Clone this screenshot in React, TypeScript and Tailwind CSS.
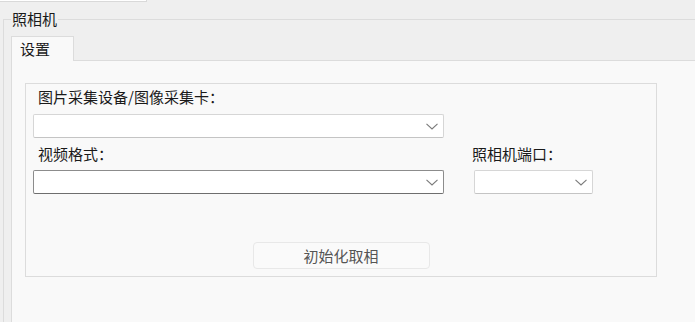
const Combo = ({ width, dark = false }: { width: string; dark?: boolean }) => (
  <div
    className={`${width} h-[24px] flex items-center justify-end pr-[5px] bg-white rounded-[2px] border ${
      dark ? 'border-[#8c8c8c] border-b-[#6e6e6e]' : 'border-[#d6d6d6] border-b-[#c4c4c4]'
    }`}
  >
    <svg width="12" height="7" viewBox="0 0 12 7" className="mt-[1px]">
      <polyline points="0.5,0.8 6,6 11.5,0.8" fill="none" stroke="#7a7a7a" strokeWidth="1.1" />
    </svg>
  </div>
);

const App = () => {
  return (
    <div
      className="w-[695px] h-[322px] overflow-hidden bg-[#efefef] flex flex-col text-[15px] leading-[20px] text-[#1a1a1a]"
      style={{ fontFamily: '"Noto Sans CJK SC", "Noto Sans", sans-serif' }}
    >
      {/* top strip */}
      <div className="w-[147px] h-[2px] bg-white border-b border-r border-[#d9d9d9]" />

      {/* 照相机 group */}
      <fieldset className="mt-[7px] ml-[3px] flex-1 flex flex-col border-t border-l border-[#dcdcdc] min-h-0">
        <legend className="ml-[7px] px-[1px]">照相机</legend>

        <div className="ml-[7px] mt-[7px] flex-1 flex flex-col min-h-0">
          {/* tab header */}
          <div className="flex">
            <div className="w-[63px] h-[25px] -mb-px relative z-10 bg-[#f9f9f9] border-t border-l border-r border-[#dcdcdc] pl-[8px] pt-[2px]">
              设置
            </div>
          </div>

          {/* tab pane */}
          <div className="flex-1 bg-[#f9f9f9] border-t border-l border-[#dcdcdc] pl-[13px] pt-[22px]">
            <div className="w-[632px] h-[194px] border border-[#dcdcdc] flex flex-col">
              <div className="pl-[7px] flex flex-col">
                <div className="mt-[3px] pl-[5px]">图片采集设备/图像采集卡：</div>
                <div className="mt-[7px]">
                  <Combo width="w-[411px]" />
                </div>

                <div className="flex mt-[6px]">
                  <div className="flex flex-col w-[411px]">
                    <div className="pl-[5px]">视频格式：</div>
                    <div className="mt-[6px]">
                      <Combo width="w-[411px]" dark />
                    </div>
                  </div>
                  <div className="flex flex-col ml-[28px]">
                    <div>照相机端口：</div>
                    <div className="mt-[6px] ml-[2px]">
                      <Combo width="w-[119px]" />
                    </div>
                  </div>
                </div>
              </div>

              <button className="self-center mt-[48px] w-[177px] h-[27px] rounded-[4px] border border-[#e8e8e8] bg-[#fafafa] text-[#555555]">
                初始化取相
              </button>
            </div>
          </div>
        </div>
      </fieldset>
    </div>
  );
};

export default App;
